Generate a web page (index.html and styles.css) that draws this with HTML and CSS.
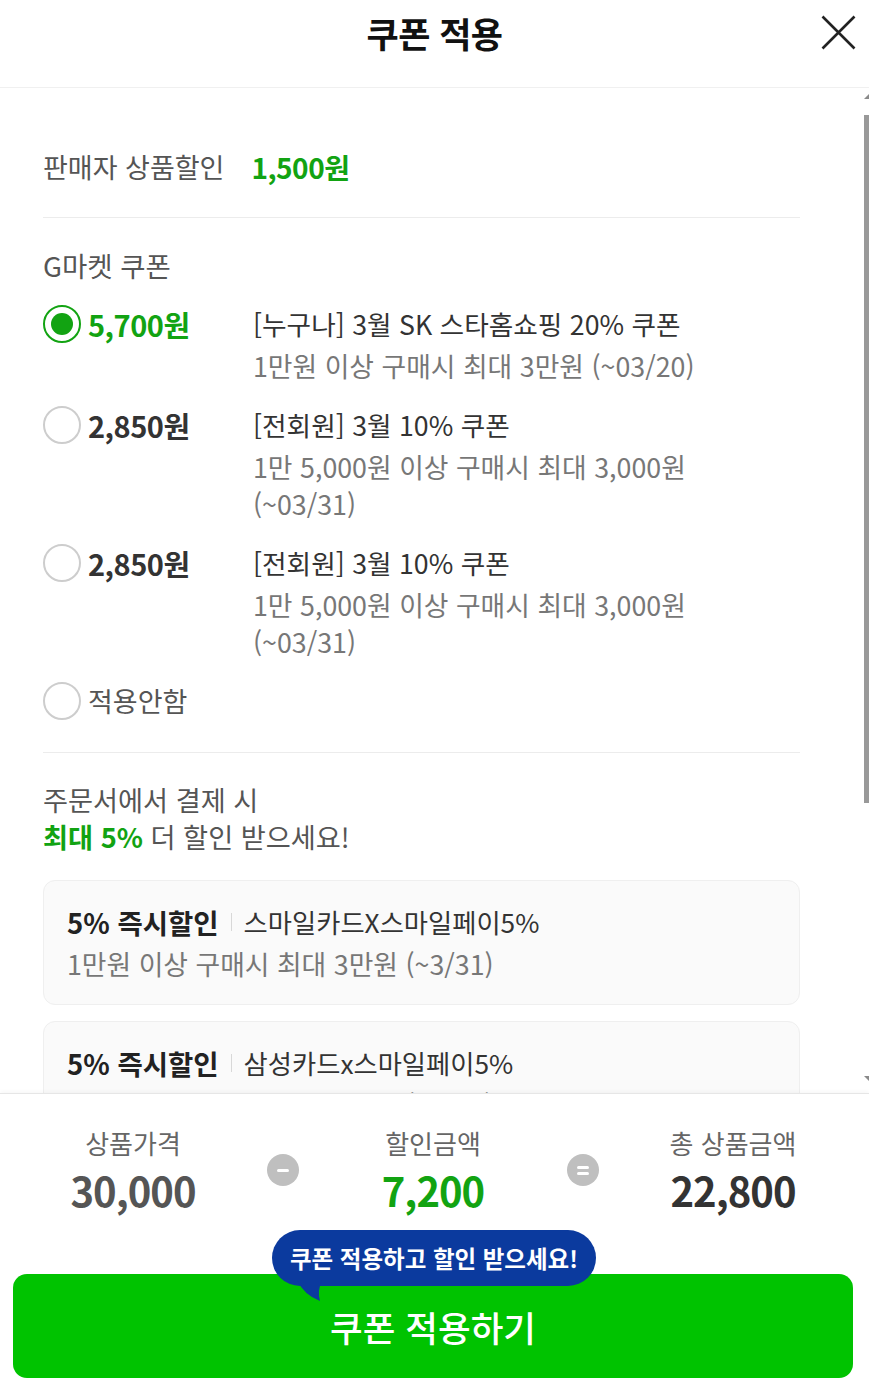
FILE: index.html
```html
<!DOCTYPE html>
<html lang="ko">
<head>
<meta charset="utf-8">
<title>쿠폰 적용</title>
<link rel="stylesheet" href="styles.css">
</head>
<body>
<div class="app">
  <header class="top">
    <div class="top-spacer"></div>
    <h1 class="title">쿠폰 적용</h1>
    <button class="close" aria-label="닫기">
      <svg width="35" height="35" viewBox="0 0 35 35"><path d="M1.5 1.5 L33.5 33.5 M33.5 1.5 L1.5 33.5" stroke="#222" stroke-width="2.6" fill="none"/></svg>
    </button>
  </header>

  <main class="scroll">
    <section class="sec sec-seller">
      <span class="label">판매자 상품할인</span>
      <span class="seller-amt">1,500원</span>
    </section>

    <section class="sec sec-coupons">
      <div class="sec-title">G마켓 쿠폰</div>
      <div class="coupon-list">
        <div class="coupon">
          <div class="coupon-left"><span class="radio on"></span><span class="amt green">5,700원</span></div>
          <div class="coupon-desc">
            <div class="c-title">[누구나] 3월 SK 스타홈쇼핑 20% 쿠폰</div>
            <div class="c-sub">1만원 이상 구매시 최대 3만원 (~03/20)</div>
          </div>
        </div>
        <div class="coupon">
          <div class="coupon-left"><span class="radio"></span><span class="amt">2,850원</span></div>
          <div class="coupon-desc">
            <div class="c-title">[전회원] 3월 10% 쿠폰</div>
            <div class="c-sub">1만 5,000원 이상 구매시 최대 3,000원 (~03/31)</div>
          </div>
        </div>
        <div class="coupon">
          <div class="coupon-left"><span class="radio"></span><span class="amt">2,850원</span></div>
          <div class="coupon-desc">
            <div class="c-title">[전회원] 3월 10% 쿠폰</div>
            <div class="c-sub">1만 5,000원 이상 구매시 최대 3,000원 (~03/31)</div>
          </div>
        </div>
        <div class="coupon">
          <div class="coupon-left"><span class="radio"></span><span class="none">적용안함</span></div>
        </div>
      </div>
    </section>

    <section class="sec sec-promo">
      <p class="promo-text">주문서에서 결제 시<br><strong>최대 5%</strong> 더 할인 받으세요!</p>
      <div class="cards">
        <div class="card">
          <div class="card-title"><span class="tag">5% 즉시할인</span><span class="bar"></span><span class="name">스마일카드X스마일페이5%</span></div>
          <div class="card-sub">1만원 이상 구매시 최대 3만원 (~3/31)</div>
        </div>
        <div class="card">
          <div class="card-title"><span class="tag">5% 즉시할인</span><span class="bar"></span><span class="name">삼성카드x스마일페이5%</span></div>
          <div class="card-sub">1만원 이상 구매시 최대 3만원 (~3/31)</div>
        </div>
        <div class="card">
          <div class="card-title"><span class="tag">5% 즉시할인</span><span class="bar"></span><span class="name">신한카드x스마일페이5%</span></div>
          <div class="card-sub">1만원 이상 구매시 최대 3만원 (~3/31)</div>
        </div>
        <div class="card">
          <div class="card-title"><span class="tag">5% 즉시할인</span><span class="bar"></span><span class="name">KB국민카드x스마일페이5%</span></div>
          <div class="card-sub">1만원 이상 구매시 최대 3만원 (~3/31)</div>
        </div>
      </div>
    </section>
  </main>

  <div class="scrollbar" aria-hidden="true">
    <span class="sb-up"></span>
    <span class="sb-thumb"></span>
    <span class="sb-down"></span>
  </div>

  <footer class="bottom">
    <div class="summary">
      <div class="sum-item">
        <div class="sum-label">상품가격</div>
        <div class="sum-val">30,000</div>
      </div>
      <div class="op op-minus"></div>
      <div class="sum-item">
        <div class="sum-label">할인금액</div>
        <div class="sum-val green">7,200</div>
      </div>
      <div class="op op-equal"></div>
      <div class="sum-item">
        <div class="sum-label">총 상품금액</div>
        <div class="sum-val dark">22,800</div>
      </div>
    </div>
    <button class="apply">쿠폰 적용하기</button>
    <div class="bubble">쿠폰 적용하고 할인 받으세요!
      <svg class="tail" width="28" height="24" viewBox="0 0 28 24"><path d="M1 2 Q8 17 24 23 Q21 13 26 2 Z" fill="#0b3a9e"/></svg>
    </div>
  </footer>
</div>
</body>
</html>
```

FILE: styles.css
```css
* {
  box-sizing: border-box;
  margin: 0;
  padding: 0;
}

html, body {
  height: 100%;
}

body {
  font-family: "Noto Sans CJK KR", "Noto Sans", sans-serif;
  background: #fff;
  color: #333;
  overflow: hidden;
}

.app {
  position: relative;
  display: flex;
  flex-direction: column;
  height: 1385px;
}

.green {
  color: #12a312;
}

/* header */
.top {
  flex: none;
  height: 88px;
  display: grid;
  grid-template-columns: 1fr auto 1fr;
  align-items: start;
  border-bottom: 1px solid #f0f0f0;
}

.title {
  font-size: 35px;
  font-weight: 700;
  color: #111;
  line-height: 66px;
  letter-spacing: -0.5px;
}

.close {
  justify-self: end;
  width: 35px;
  height: 35px;
  margin: 15px 13px 0 0;
  border: 0;
  background: none;
  display: block;
}

.close svg {
  display: block;
}

/* scroll area */
.scroll {
  flex: 1;
  overflow-y: scroll;
  scrollbar-width: none;
  padding: 0 69px 70px 43px;
}

.scrollbar {
  position: absolute;
  right: 0;
  top: 88px;
  width: 5px;
  height: 1005px;
}

.sb-up {
  position: absolute;
  top: 6px;
  right: 0;
  width: 0;
  height: 0;
  border-left: 5px solid transparent;
  border-bottom: 5px solid #8a8a8a;
}

.sb-thumb {
  position: absolute;
  top: 27px;
  right: 0;
  width: 5px;
  height: 688px;
  background: #999;
}

.sb-down {
  position: absolute;
  top: 988px;
  right: 0;
  width: 0;
  height: 0;
  border-left: 5px solid transparent;
  border-top: 5px solid #8a8a8a;
}

.sec {
  border-bottom: 1px solid #ececec;
}

.sec-seller {
  display: flex;
  align-items: center;
  gap: 27px;
  padding: 59px 0 30px;
}

.label {
  font-size: 27px;
  color: #555;
  line-height: 40px;
}

.seller-amt {
  font-size: 28px;
  font-weight: 700;
  color: #12a312;
  line-height: 40px;
  letter-spacing: -0.5px;
}

.sec-coupons {
  padding: 29px 0 31px;
}

.sec-title {
  font-size: 27.5px;
  color: #555;
  line-height: 36px;
  margin-bottom: 21px;
}

.coupon-list {
  display: flex;
  flex-direction: column;
  gap: 21px;
}

.coupon {
  display: flex;
  align-items: flex-start;
}

.coupon-left {
  flex: none;
  width: 210px;
  height: 40px;
  display: flex;
  align-items: center;
  gap: 7px;
}

.radio {
  flex: none;
  width: 38px;
  height: 38px;
  border: 2px solid #cdcdcd;
  border-radius: 50%;
  display: grid;
  place-items: center;
}

.radio.on {
  border-color: #12a312;
}

.radio.on::after {
  content: "";
  width: 22px;
  height: 22px;
  border-radius: 50%;
  background: #12a312;
}

.amt {
  font-size: 29px;
  font-weight: 700;
  line-height: 40px;
  color: #333;
  letter-spacing: -0.5px;
}

.amt.green {
  color: #12a312;
}

.none {
  font-size: 27px;
  color: #555;
  line-height: 40px;
}

.coupon-desc {
  max-width: 490px;
}

.c-title {
  font-size: 26.7px;
  color: #333;
  line-height: 40px;
}

.c-sub {
  font-size: 26.8px;
  color: #777;
  line-height: 37px;
  margin-top: 3px;
}

.sec-promo {
  border-bottom: 0;
  padding-top: 28px;
}

.promo-text {
  font-size: 27.2px;
  color: #555;
  line-height: 37px;
}

.promo-text strong {
  color: #12a312;
  font-weight: 700;
}

.cards {
  margin-top: 25px;
  display: flex;
  flex-direction: column;
  gap: 16px;
}

.card {
  background: #fafafa;
  border: 1px solid #efefef;
  border-radius: 12px;
  padding: 21px 23px 20px;
}

.card-title {
  display: flex;
  align-items: center;
  line-height: 40px;
}

.tag {
  font-size: 27.5px;
  font-weight: 700;
  color: #222;
}

.bar {
  width: 1px;
  height: 18px;
  background: #d8d8d8;
  margin: 0 12px;
}

.name {
  font-size: 26.3px;
  color: #333;
}

.card-sub {
  font-size: 26.8px;
  color: #777;
  line-height: 40px;
  margin-top: 2px;
}

/* footer */
.bottom {
  flex: none;
  height: 292px;
  position: relative;
  border-top: 1px solid #e6e6e6;
  box-shadow: 0 -2px 4px rgba(0, 0, 0, 0.03);
  padding-top: 31px;
  background: #fff;
}

.summary {
  display: grid;
  grid-template-columns: 200px 100px 200px 100px 200px;
  margin-left: 33px;
}

.sum-item {
  text-align: center;
}

.sum-label {
  font-size: 26px;
  color: #666;
  line-height: 36px;
}

.sum-val {
  font-size: 40px;
  font-weight: 700;
  line-height: 48px;
  margin-top: 5px;
  color: #555;
  letter-spacing: -1px;
}

.sum-val.green {
  color: #12a312;
}

.sum-val.dark {
  color: #333;
}

.op {
  justify-self: center;
  width: 32px;
  height: 32px;
  margin-top: 29px;
  border-radius: 50%;
  background: #bfbfbf;
  position: relative;
}

.op::before,
.op::after {
  content: "";
  position: absolute;
  left: 10px;
  width: 12px;
  height: 3px;
  border-radius: 2px;
  background: #fff;
}

.op-minus::before {
  top: 14.5px;
}

.op-minus::after {
  display: none;
}

.op-equal::before {
  top: 11.5px;
}

.op-equal::after {
  top: 17.5px;
}

.apply {
  display: flex;
  align-items: center;
  justify-content: center;
  width: calc(100% - 29px);
  height: 104px;
  margin: 60px 16px 0 13px;
  border: 0;
  border-radius: 14px;
  background: #00c300;
  color: #fff;
  font-family: "Noto Sans CJK KR", "Noto Sans", sans-serif;
  font-size: 35.5px;
  font-weight: 500;
}

.bubble {
  position: absolute;
  left: 272px;
  top: 136px;
  height: 56px;
  padding: 0 18px;
  border-radius: 28px;
  background: #0b3a9e;
  color: #fff;
  font-size: 23.5px;
  font-weight: 700;
  line-height: 56px;
  white-space: nowrap;
}

.tail {
  position: absolute;
  left: 24px;
  top: 48px;
  display: block;
}
```
